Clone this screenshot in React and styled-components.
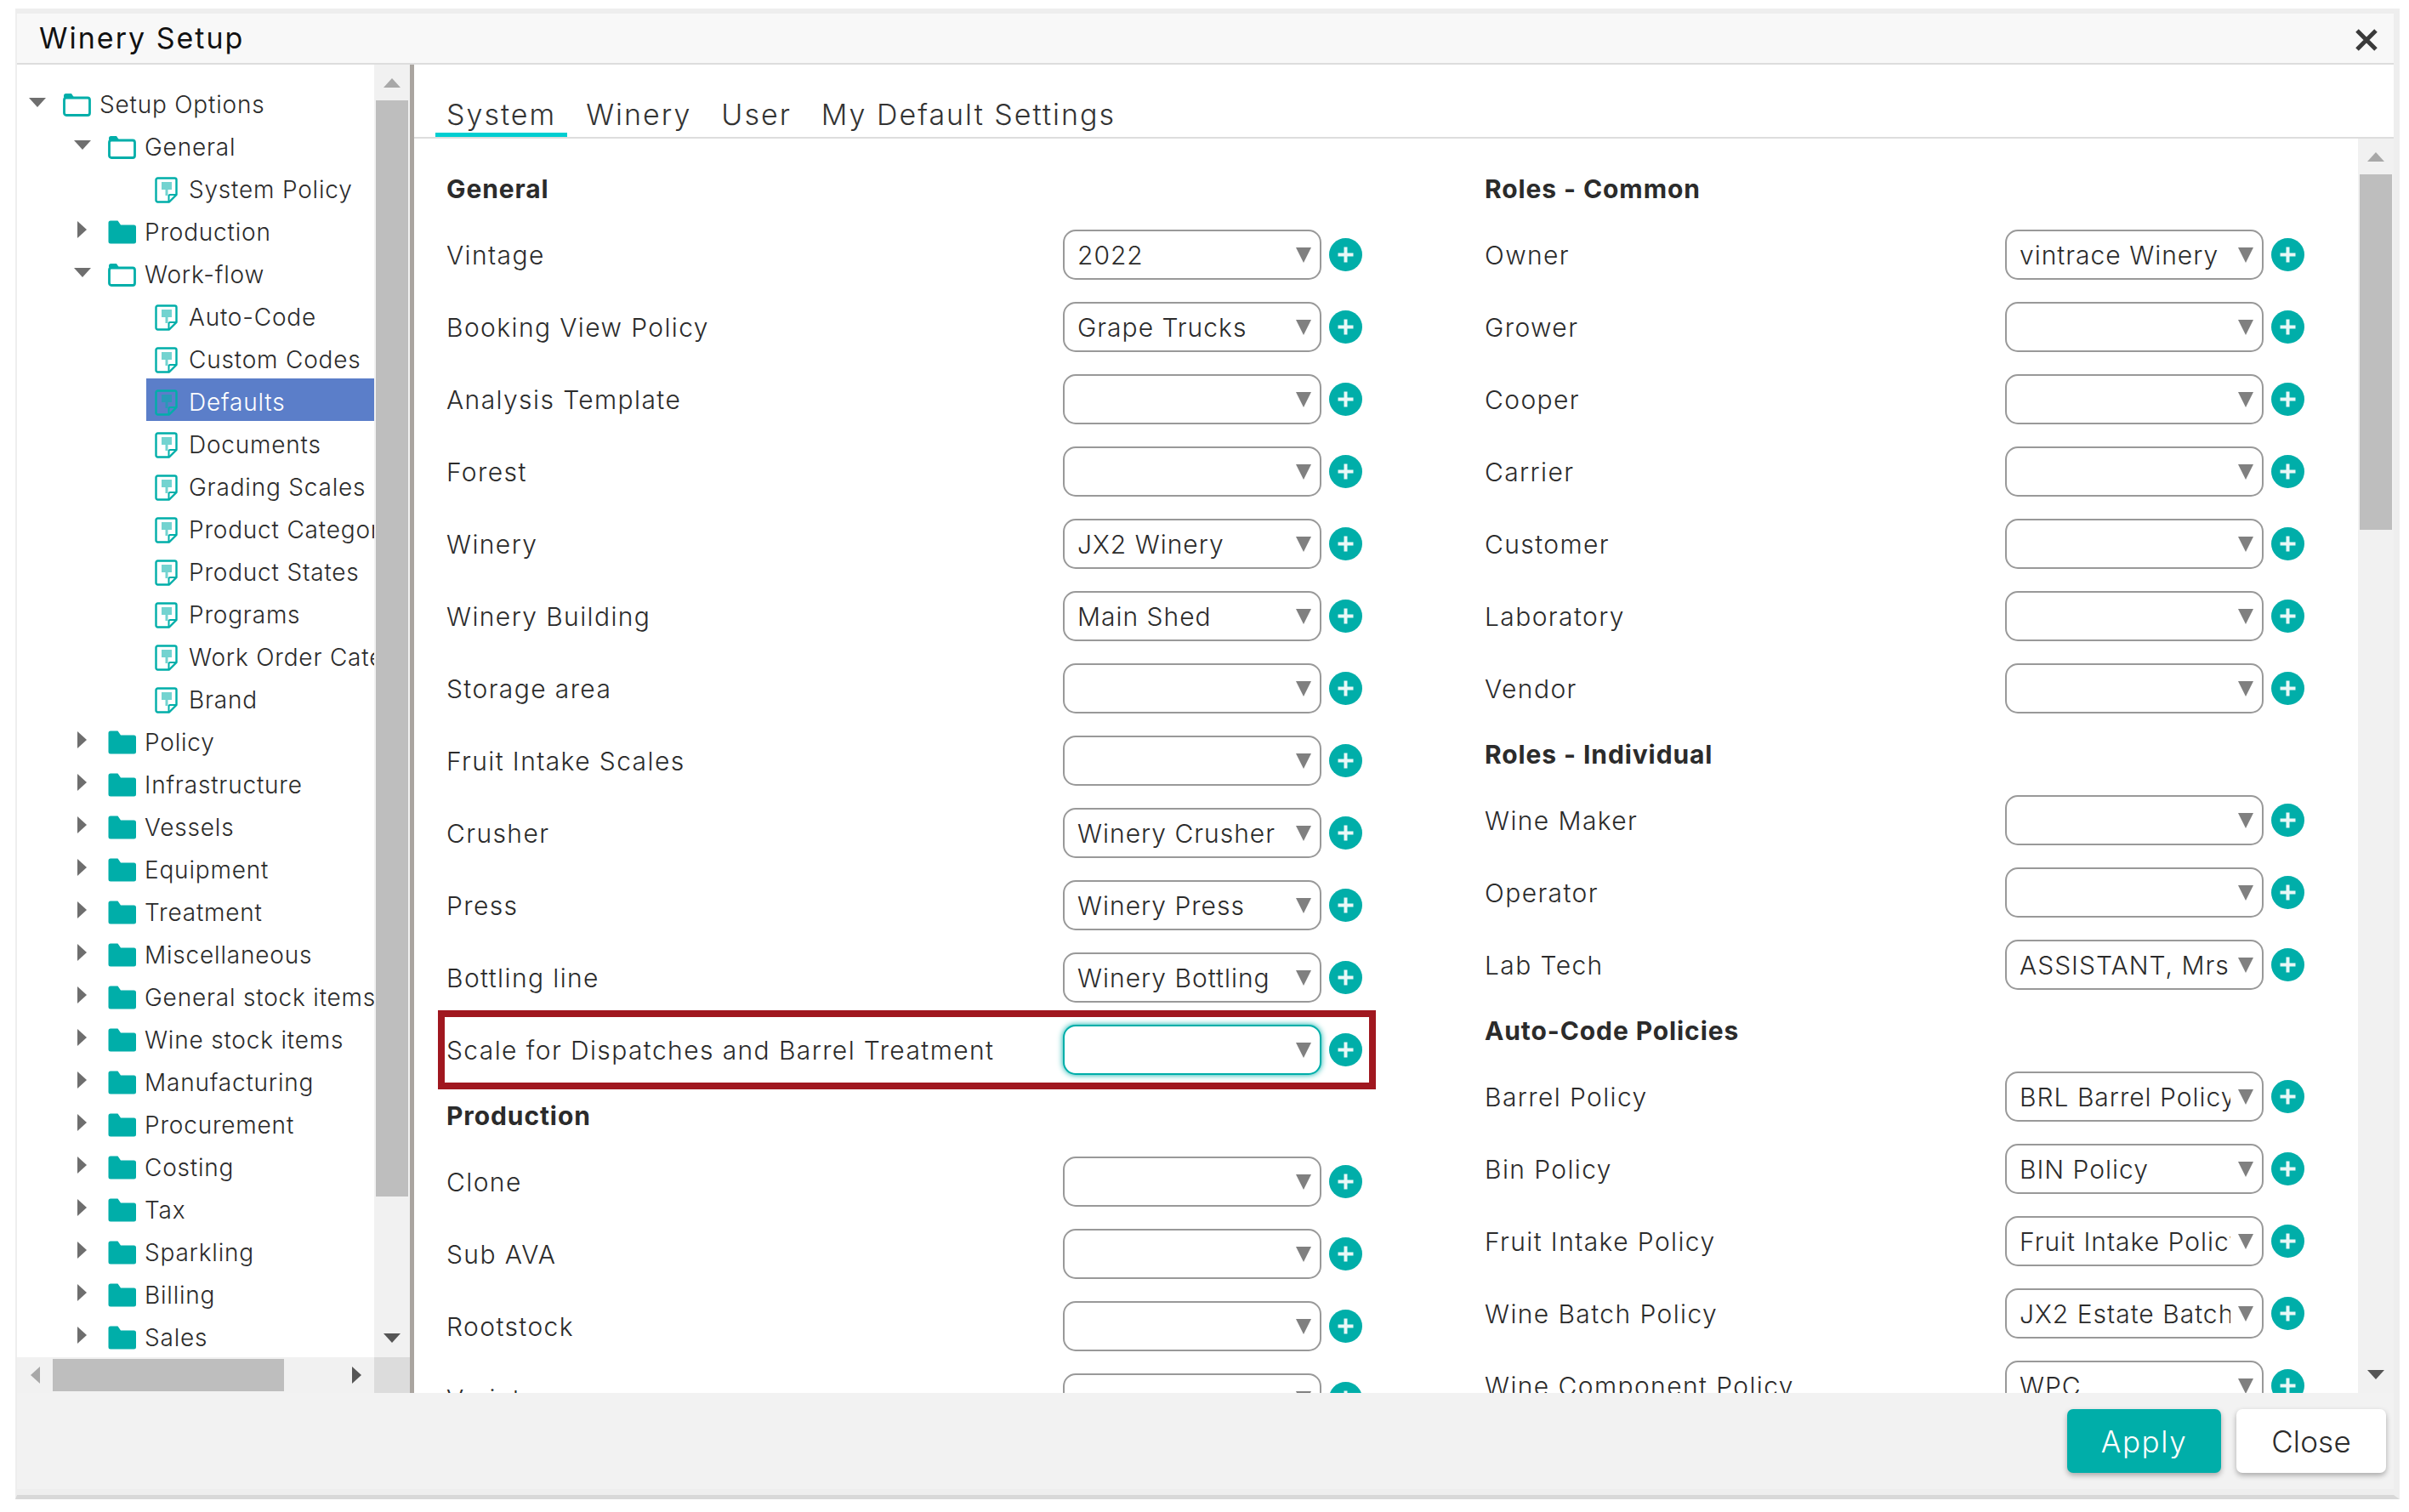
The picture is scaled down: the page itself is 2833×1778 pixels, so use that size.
import React from 'react';
import styled, { createGlobalStyle } from 'styled-components';

const TEAL = '#00aea9';
const FONT = 'Inter, "Open Sans", "Liberation Sans", sans-serif';

const treeRows = [
  { label: 'Setup Options', level: 0, icon: 'open', toggle: 'down' },
  { label: 'General', level: 1, icon: 'open', toggle: 'down' },
  { label: 'System Policy', level: 2, icon: 'doc' },
  { label: 'Production', level: 1, icon: 'closed', toggle: 'right' },
  { label: 'Work-flow', level: 1, icon: 'open', toggle: 'down' },
  { label: 'Auto-Code', level: 2, icon: 'doc' },
  { label: 'Custom Codes', level: 2, icon: 'doc' },
  { label: 'Defaults', level: 2, icon: 'doc', selected: true },
  { label: 'Documents', level: 2, icon: 'doc' },
  { label: 'Grading Scales', level: 2, icon: 'doc' },
  { label: 'Product Categories', level: 2, icon: 'doc' },
  { label: 'Product States', level: 2, icon: 'doc' },
  { label: 'Programs', level: 2, icon: 'doc' },
  { label: 'Work Order Categories', level: 2, icon: 'doc' },
  { label: 'Brand', level: 2, icon: 'doc' },
  ...[
    'Policy', 'Infrastructure', 'Vessels', 'Equipment', 'Treatment', 'Miscellaneous',
    'General stock items', 'Wine stock items', 'Manufacturing', 'Procurement', 'Costing',
    'Tax', 'Sparkling', 'Billing', 'Sales',
  ].map((label) => ({ label, level: 1, icon: 'closed', toggle: 'right' })),
];

const leftForm = [
  { title: 'General' },
  { label: 'Vintage', value: '2022' },
  { label: 'Booking View Policy', value: 'Grape Trucks' },
  { label: 'Analysis Template' },
  { label: 'Forest' },
  { label: 'Winery', value: 'JX2 Winery' },
  { label: 'Winery Building', value: 'Main Shed' },
  { label: 'Storage area' },
  { label: 'Fruit Intake Scales' },
  { label: 'Crusher', value: 'Winery Crusher' },
  { label: 'Press', value: 'Winery Press' },
  { label: 'Bottling line', value: 'Winery Bottling' },
  { label: 'Scale for Dispatches and Barrel Treatment', focused: true },
  { title: 'Production' },
  { label: 'Clone' },
  { label: 'Sub AVA' },
  { label: 'Rootstock' },
  { label: 'Variety' },
];

const rightForm = [
  { title: 'Roles - Common' },
  { label: 'Owner', value: 'vintrace Winery' },
  { label: 'Grower' },
  { label: 'Cooper' },
  { label: 'Carrier' },
  { label: 'Customer' },
  { label: 'Laboratory' },
  { label: 'Vendor' },
  { title: 'Roles - Individual' },
  { label: 'Wine Maker' },
  { label: 'Operator' },
  { label: 'Lab Tech', value: 'ASSISTANT, Mrs Helper' },
  { title: 'Auto-Code Policies' },
  { label: 'Barrel Policy', value: 'BRL Barrel Policy' },
  { label: 'Bin Policy', value: 'BIN Policy' },
  { label: 'Fruit Intake Policy', value: 'Fruit Intake Policy' },
  { label: 'Wine Batch Policy', value: 'JX2 Estate Batch' },
  { label: 'Wine Component Policy', value: 'WPC' },
];

const GlobalStyle = createGlobalStyle`
  html, body {
    margin: 0;
    background: #fff;
    font-family: ${FONT};
    color: #2b2b2b;
  }
`;

const Window = styled.div`
  box-sizing: border-box;
  width: 2804px;
  height: 1753px;
  margin: 10px 0 0 18px;
  display: flex;
  flex-direction: column;
  background: #eee;
  border-style: solid;
  border-color: #eee #eee #d8d8d8 #eee;
  border-width: 6px 7px 5px 2px;
`;

const Header = styled.div`
  flex: none;
  height: 56px;
  padding: 0 18px 2px 26px;
  display: flex;
  align-items: center;
  justify-content: space-between;
  background: #f8f8f8;
  border-bottom: 2px solid #ddd;
`;

const Title = styled.div`
  font-size: 34px;
  font-weight: 400;
  color: #111;
  letter-spacing: 2px;
`;

const CloseSvg = styled.svg`
  flex: none;
  width: 28px;
  height: 28px;
  margin-top: 6px;
`;

const Body = styled.div`
  flex: none;
  height: 1562px;
  display: flex;
  background: #fff;
  overflow: hidden;
`;

const TreePane = styled.div`
  flex: none;
  width: 462px;
  display: grid;
  grid-template-columns: 420px 42px;
  grid-template-rows: 1520px 42px;
`;

const TreeList = styled.div`
  padding-top: 19px;
  overflow: hidden;
  box-sizing: border-box;
`;

const TreeRow = styled.div`
  height: 50px;
  display: flex;
  align-items: center;
  padding-left: ${(p) => [3, 56, 152][p.$level]}px;
  font-size: 28px;
  font-weight: 300;
  letter-spacing: 0.8px;
  white-space: nowrap;
`;

const RowLabel = styled.div`
  display: flex;
  align-items: center;
  flex: 1;
  min-width: 0;
  height: 100%;
  box-sizing: border-box;
  padding: 6px 0 0 10px;
  background: ${(p) => (p.$selected ? '#5b7ec9' : 'transparent')};
  color: ${(p) => (p.$selected ? '#fff' : '#2b2b2b')};
`;

const ToggleSlot = styled.div`
  flex: none;
  width: 41px;
  display: flex;
  justify-content: center;
`;

const Triangle = styled.span`
  display: block;
  width: 0;
  height: 0;
  border-style: solid;
  border-color: transparent;
  ${(p) => p.$dir === 'down' && `border-width: 11px 10px 0 10px; border-top-color: ${p.$color};`}
  ${(p) => p.$dir === 'up' && `border-width: 0 10px 11px 10px; border-bottom-color: ${p.$color};`}
  ${(p) => p.$dir === 'right' && `border-width: 10px 0 10px 11px; border-left-color: ${p.$color};`}
  ${(p) => p.$dir === 'left' && `border-width: 10px 11px 10px 0; border-right-color: ${p.$color};`}
`;

const FolderSvg = styled.svg`
  flex: none;
  width: 33px;
  height: 28px;
  margin-right: 10px;
`;

const DocSvg = styled.svg`
  flex: none;
  width: 27px;
  height: 31px;
  margin-right: 13px;
`;

const VScroll = styled.div`
  background: #f1f1f1;
  display: flex;
  flex-direction: column;
  align-items: center;
  padding: 0 2px;
`;

const ScrollEnd = styled.div`
  flex: none;
  height: ${(p) => p.$size}px;
  margin-top: ${(p) => (p.$bottom ? 'auto' : '0')};
  display: flex;
  align-items: center;
  justify-content: center;
`;

const VThumb = styled.div`
  flex: none;
  align-self: stretch;
  height: ${(p) => p.$size}px;
  background: #bebebe;
`;

const HScroll = styled.div`
  background: #f1f1f1;
  display: flex;
  align-items: center;
  padding: 2px 0;
`;

const HEnd = styled.div`
  flex: none;
  width: 42px;
  margin-left: ${(p) => (p.$end ? 'auto' : '0')};
  display: flex;
  justify-content: center;
`;

const HThumb = styled.div`
  flex: none;
  width: 272px;
  height: 38px;
  background: #bebebe;
`;

const Corner = styled.div`
  background: #dcdcdc;
`;

const Splitter = styled.div`
  flex: none;
  width: 5px;
  background: #aaa5a0;
`;

const Main = styled.div`
  flex: 1;
  min-width: 0;
  display: flex;
  flex-direction: column;
`;

const Tabs = styled.div`
  flex: none;
  height: 87px;
  box-sizing: border-box;
  padding-left: 25px;
  display: flex;
  align-items: flex-end;
  gap: 9px;
  border-bottom: 2px solid #ddd;
`;

const Tab = styled.div`
  padding: 6px 13px 0;
  height: 53px;
  font-size: 34px;
  font-weight: 300;
  letter-spacing: 2px;
  color: #333;
  box-sizing: border-box;
  border-bottom: 5px solid ${(p) => (p.$active ? '#00ced1' : 'transparent')};
`;

const Content = styled.div`
  flex: 1;
  min-height: 0;
  display: flex;
`;

const Form = styled.div`
  flex: 1;
  min-width: 0;
  padding: 24px 0 0 38px;
  display: grid;
  grid-template-columns: 1221px 1fr;
  align-items: start;
  overflow: hidden;
`;

const Column = styled.div`
  display: flex;
  flex-direction: column;
  align-items: flex-start;
`;

const SectionTitle = styled.div`
  height: 70px;
  display: flex;
  align-items: center;
  font-size: 30px;
  font-weight: 700;
  letter-spacing: 0.9px;
  color: #2b2b2b;
`;

const Row = styled.div`
  position: relative;
  flex: none;
  height: 85px;
  display: flex;
  align-items: center;

  ${(p) => p.$highlight && `
    &::after {
      content: '';
      position: absolute;
      top: -4px;
      bottom: -4px;
      left: -10px;
      right: -16px;
      border: 8px solid #a0171f;
      pointer-events: none;
    }
  `}
`;

const Label = styled.div`
  flex: none;
  width: ${(p) => p.$width}px;
  font-size: 30px;
  font-weight: 300;
  letter-spacing: 1.4px;
  color: #2b2b2b;
  white-space: nowrap;
`;

const Dropdown = styled.div`
  flex: none;
  box-sizing: border-box;
  width: 304px;
  height: 59px;
  padding: 0 10px 0 15px;
  display: flex;
  align-items: center;
  gap: 9px;
  background: #fff;
  border: 2px solid ${(p) => (p.$focused ? TEAL : '#999')};
  border-radius: 15px;
  box-shadow: ${(p) => (p.$focused ? `0 0 7px ${TEAL}` : 'none')};
`;

const DropdownValue = styled.div`
  flex: 1;
  min-width: 0;
  overflow: hidden;
  white-space: nowrap;
  font-size: 30px;
  font-weight: 300;
  letter-spacing: 1px;
  color: #2b2b2b;
`;

const DropArrow = styled.span`
  flex: none;
  width: 0;
  height: 0;
  border-style: solid;
  border-width: 18px 9px 0 9px;
  border-color: #808080 transparent transparent transparent;
`;

const PlusSvg = styled.svg`
  flex: none;
  width: 39px;
  height: 39px;
  margin-left: 9px;
`;

const MainScroll = styled(VScroll)`
  flex: none;
  width: 38px;
`;

const Footer = styled.div`
  flex: none;
  height: 113px;
  box-sizing: border-box;
  padding: 19px 9px 0 0;
  display: flex;
  justify-content: flex-end;
  align-items: flex-start;
  gap: 18px;
  background: #f2f2f2;
`;

const Button = styled.button`
  height: 75px;
  width: ${(p) => p.$width}px;
  border: 0;
  border-radius: 7px;
  font-family: ${FONT};
  font-size: 35px;
  font-weight: 300;
  letter-spacing: ${(p) => (p.$primary ? '1.6px' : '0.2px')};
  color: ${(p) => (p.$primary ? '#fff' : '#2b2b2b')};
  background: ${(p) => (p.$primary ? TEAL : '#fff')};
  box-shadow: 0 3px 6px rgba(0, 0, 0, 0.3);
`;

const OpenFolder = () => (
  <FolderSvg viewBox="0 0 33 28">
    <path d="M1 7V3.500A2.500 2.500 0 0 1 3.500 1h6.500l3 4.500H1z" fill={TEAL} />
    <rect x="1.500" y="6" width="30" height="20.500" rx="2.500" fill="none" stroke={TEAL} strokeWidth="2.800" />
  </FolderSvg>
);

const ClosedFolder = () => (
  <FolderSvg viewBox="0 0 33 28">
    <path d="M0.500 3a2.500 2.500 0 0 1 2.500-2.500h8.500l3.500 5h15.500a2.500 2.500 0 0 1 2.500 2.500v17a2.500 2.500 0 0 1-2.500 2.500H3a2.500 2.500 0 0 1-2.500-2.500z" fill={TEAL} />
  </FolderSvg>
);

const DocIcon = () => (
  <DocSvg viewBox="0 0 27 31">
    <path d="M3.500 1.500h20a2 2 0 0 1 2 2V21l-8.500 8.500H3.500a2 2 0 0 1-2-2V3.500a2 2 0 0 1 2-2z" fill="none" stroke={TEAL} strokeWidth="2.400" strokeLinejoin="round" />
    <path d="M8 6h12v9h-4.500v7h-3v-7H8z" fill={TEAL} opacity="0.55" />
    <path d="M16.500 29v-6.500a1.500 1.500 0 0 1 1.500-1.500h7.500" fill="none" stroke={TEAL} strokeWidth="2" />
  </DocSvg>
);

const PlusIcon = () => (
  <PlusSvg viewBox="0 0 39 39">
    <circle cx="19.500" cy="19.500" r="19.500" fill={TEAL} />
    <path d="M19.500 10.500v18M10.500 19.500h18" stroke="#e8f8f7" strokeWidth="4" />
  </PlusSvg>
);

const TreeIcon = ({ kind }) => {
  if (kind === 'open') return <OpenFolder />;
  if (kind === 'closed') return <ClosedFolder />;
  return <DocIcon />;
};

const FormColumn = ({ items, labelWidth }) => (
  <Column>
    {items.map((item) =>
      item.title ? (
        <SectionTitle key={item.title}>{item.title}</SectionTitle>
      ) : (
        <Row key={item.label} $highlight={item.focused}>
          <Label $width={labelWidth}>{item.label}</Label>
          <Dropdown $focused={item.focused}>
            <DropdownValue>{item.value}</DropdownValue>
            <DropArrow />
          </Dropdown>
          <PlusIcon />
        </Row>
      )
    )}
  </Column>
);

const App = () => (
  <>
    <GlobalStyle />
    <Window>
      <Header>
        <Title>Winery Setup</Title>
        <CloseSvg viewBox="0 0 28 28">
          <path d="M3 3l22 22M25 3L3 25" stroke="#3a3a3a" strokeWidth="5" />
        </CloseSvg>
      </Header>
      <Body>
        <TreePane>
          <TreeList>
            {treeRows.map((row) => (
              <TreeRow key={row.label} $level={row.level}>
                {row.level < 2 && (
                  <ToggleSlot>
                    <Triangle $dir={row.toggle} $color="#6e6e6e" />
                  </ToggleSlot>
                )}
                <RowLabel $selected={row.selected}>
                  <TreeIcon kind={row.icon} />
                  {row.label}
                </RowLabel>
              </TreeRow>
            ))}
          </TreeList>
          <VScroll>
            <ScrollEnd $size={42}><Triangle $dir="up" $color="#a8a8a8" /></ScrollEnd>
            <VThumb $size={1289} />
            <ScrollEnd $size={46} $bottom><Triangle $dir="down" $color="#555" /></ScrollEnd>
          </VScroll>
          <HScroll>
            <HEnd><Triangle $dir="left" $color="#a8a8a8" /></HEnd>
            <HThumb />
            <HEnd $end><Triangle $dir="right" $color="#555" /></HEnd>
          </HScroll>
          <Corner />
        </TreePane>
        <Splitter />
        <Main>
          <Tabs>
            <Tab $active>System</Tab>
            <Tab>Winery</Tab>
            <Tab>User</Tab>
            <Tab>My Default Settings</Tab>
          </Tabs>
          <Content>
            <Form>
              <FormColumn items={leftForm} labelWidth={725} />
              <FormColumn items={rightForm} labelWidth={612} />
            </Form>
            <MainScroll>
              <ScrollEnd $size={42}><Triangle $dir="up" $color="#a8a8a8" /></ScrollEnd>
              <VThumb $size={418} />
              <ScrollEnd $size={44} $bottom><Triangle $dir="down" $color="#555" /></ScrollEnd>
            </MainScroll>
          </Content>
        </Main>
      </Body>
      <Footer>
        <Button $primary $width={181}>Apply</Button>
        <Button $width={176}>Close</Button>
      </Footer>
    </Window>
  </>
);

export default App;
